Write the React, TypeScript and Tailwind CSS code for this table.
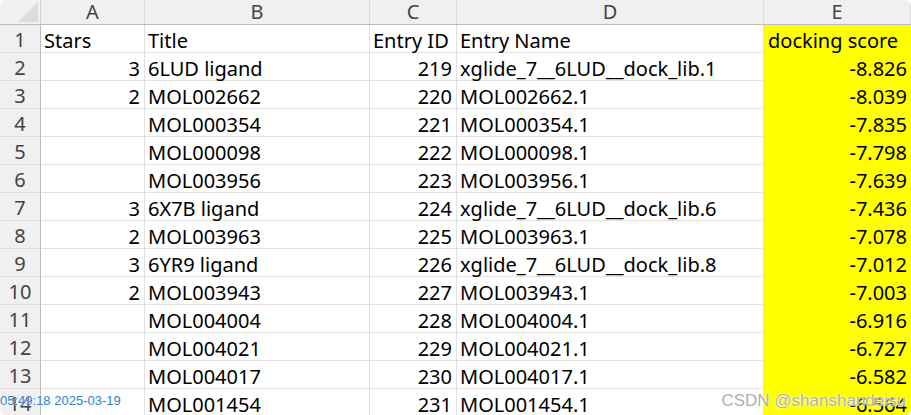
const columns = ['A', 'B', 'C', 'D', 'E'];

type Row = [string, string, string, string, string];

const rows: Row[] = [
  ['Stars', 'Title', 'Entry ID', 'Entry Name', 'docking score'],
  ['3', '6LUD ligand', '219', 'xglide_7__6LUD__dock_lib.1', '-8.826'],
  ['2', 'MOL002662', '220', 'MOL002662.1', '-8.039'],
  ['', 'MOL000354', '221', 'MOL000354.1', '-7.835'],
  ['', 'MOL000098', '222', 'MOL000098.1', '-7.798'],
  ['', 'MOL003956', '223', 'MOL003956.1', '-7.639'],
  ['3', '6X7B ligand', '224', 'xglide_7__6LUD__dock_lib.6', '-7.436'],
  ['2', 'MOL003963', '225', 'MOL003963.1', '-7.078'],
  ['3', '6YR9 ligand', '226', 'xglide_7__6LUD__dock_lib.8', '-7.012'],
  ['2', 'MOL003943', '227', 'MOL003943.1', '-7.003'],
  ['', 'MOL004004', '228', 'MOL004004.1', '-6.916'],
  ['', 'MOL004021', '229', 'MOL004021.1', '-6.727'],
  ['', 'MOL004017', '230', 'MOL004017.1', '-6.582'],
  ['', 'MOL001454', '231', 'MOL001454.1', '-6.564'],
];

const grid = 'grid grid-cols-[41px_104px_225px_87px_307px_147px]';

function Cell({ value, right, yellow }: { value: string; right?: boolean; yellow?: boolean }) {
  return (
    <div
      className={
        'flex h-[28px] items-start overflow-visible whitespace-nowrap pt-[3px] ' +
        (right ? 'justify-end pr-[4px] ' : 'justify-start pl-[3px] ') +
        (yellow ? 'bg-[#ffff00]' : 'border-b border-r border-[#e1e1e1] bg-white')
      }
    >
      {value}
    </div>
  );
}

export default function App() {
  return (
    <div className="h-[415px] w-[911px] overflow-hidden rounded-[6px] bg-white font-['Noto_Sans','Liberation_Sans',sans-serif] text-[20px] leading-[26px] text-black">
      <div className="relative">
        {/* column headers */}
        <div className={grid + ' h-[25px] border-b border-[#bdbdbd] bg-[#f0f0f0] text-[#444]'}>
          <div className="flex items-end justify-end border-r border-[#d4d4d4] pb-[2px] pr-[2px]">
            <svg width="20" height="20" viewBox="0 0 20 20">
              <path d="M20 0 L20 20 L0 20 Z" fill="#dcdcdc" />
            </svg>
          </div>
          {columns.map((c) => (
            <div key={c} className="flex items-center justify-center border-r border-[#dcdcdc] leading-[24px]">
              {c}
            </div>
          ))}
        </div>

        {/* body */}
        {rows.map((r, i) => (
          <div key={i} className={grid}>
            <div className="flex h-[28px] items-start justify-center border-b border-r border-b-[#dcdcdc] border-r-[#bdbdbd] bg-[#f0f0f0] pt-[2px] text-[#444]">
              {i + 1}
            </div>
            <Cell value={r[0]} right={i > 0} />
            <Cell value={r[1]} />
            <Cell value={r[2]} right={i > 0} />
            <Cell value={r[3]} />
            <Cell value={r[4]} right={i > 0} yellow={i > 0} />
          </div>
        ))}
        <div className="absolute right-0 top-[25px] flex h-[28px] w-[147px] items-start bg-[#ffff00] pl-[4px] pt-[3px]">
          docking score
        </div>

        {/* watermarks */}
        <div className="absolute bottom-[3px] left-0 font-['Liberation_Sans',sans-serif] text-[13px] text-[#2f7fd0] [text-shadow:0_0_2px_#fff,0_0_1px_#fff]">
          05:49:18 2025-03-19
        </div>
        <div className="absolute bottom-[3px] right-[5px] font-['Liberation_Sans',sans-serif] text-[17px] text-[#b0b0b0] [text-shadow:0_0_2px_#fff,0_0_1px_#fff]">
          CSDN @shanshandeisu
        </div>
      </div>
    </div>
  );
}
